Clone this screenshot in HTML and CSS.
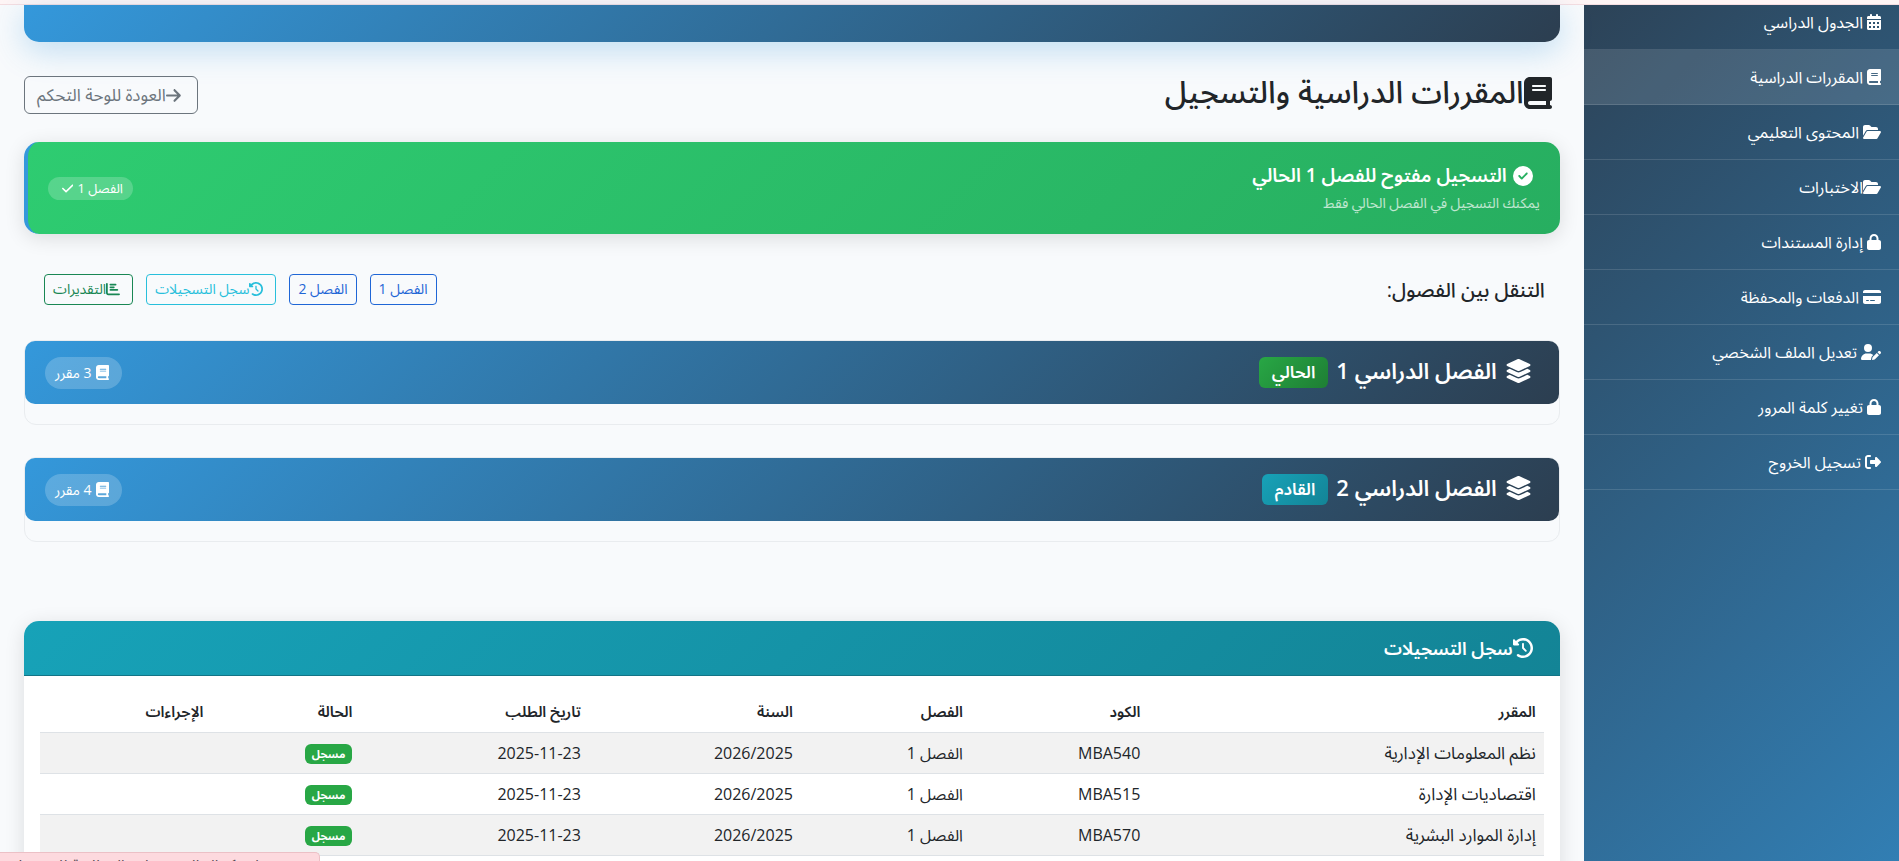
FILE: index.html
```html
<!DOCTYPE html>
<html lang="ar" dir="rtl">
<head>
<meta charset="utf-8">
<title>المقررات الدراسية والتسجيل</title>
<link rel="stylesheet" href="styles.css">
</head>
<body>
<svg class="sprite" aria-hidden="true">
  <symbol id="book" viewBox="0 0 448 512"><path d="M96 0C43 0 0 43 0 96V416c0 53 43 96 96 96H384h32c17.7 0 32-14.3 32-32s-14.3-32-32-32V384c17.7 0 32-14.3 32-32V32c0-17.7-14.3-32-32-32H384 96zm0 384H352v64H96c-17.7 0-32-14.3-32-32s14.3-32 32-32zm32-240c0-8.8 7.2-16 16-16H336c8.8 0 16 7.2 16 16s-7.2 16-16 16H144c-8.8 0-16-7.2-16-16zm16 48H336c8.8 0 16 7.2 16 16s-7.2 16-16 16H144c-8.8 0-16-7.2-16-16s7.2-16 16-16z"/></symbol>
  <symbol id="calendar" viewBox="0 0 448 512"><path d="M128 0c17.7 0 32 14.3 32 32V64H288V32c0-17.7 14.3-32 32-32s32 14.3 32 32V64h48c26.5 0 48 21.5 48 48v48H0V112C0 85.5 21.5 64 48 64H96V32c0-17.7 14.3-32 32-32zM0 192H448V464c0 26.5-21.5 48-48 48H48c-26.5 0-48-21.5-48-48V192zM64 256v64h64v-64zM192 256v64h64v-64zM320 256v64h64v-64zM64 384v64h64v-64zM192 384v64h64v-64zM320 384v64h64v-64z" fill-rule="evenodd"/></symbol>
  <symbol id="folder" viewBox="0 0 576 512"><path d="M88.7 223.8L0 375.8V96C0 60.7 28.7 32 64 32H181.5c17 0 33.3 6.7 45.3 18.7l26.5 26.5c12 12 28.3 18.7 45.3 18.7H416c35.3 0 64 28.7 64 64v32H144c-22.8 0-43.8 12.1-55.3 31.8zm27.6 16.1C122.1 230 132.6 224 144 224H544c11.5 0 22 6.1 27.7 16.1s5.7 22.2-.1 32.1l-112 192C453.9 474 443.4 480 432 480H32c-11.5 0-22-6.1-27.7-16.1s-5.7-22.2 .1-32.1l112-192z"/></symbol>
  <symbol id="lock" viewBox="0 0 448 512"><path d="M144 144v48H304V144c0-44.2-35.8-80-80-80s-80 35.8-80 80zM80 192V144C80 64.5 144.5 0 224 0s144 64.5 144 144v48h16c35.3 0 64 28.7 64 64V448c0 35.3-28.7 64-64 64H64c-35.3 0-64-28.7-64-64V256c0-35.3 28.7-64 64-64H80z"/></symbol>
  <symbol id="card" viewBox="0 0 576 512"><path d="M64 32C28.7 32 0 60.7 0 96v32H576V96c0-35.3-28.7-64-64-64H64zM576 224H0V416c0 35.3 28.7 64 64 64H512c35.3 0 64-28.7 64-64V224zM112 352h64c8.8 0 16 7.2 16 16s-7.2 16-16 16H112c-8.8 0-16-7.2-16-16s7.2-16 16-16zm112 16c0-8.8 7.2-16 16-16H368c8.8 0 16 7.2 16 16s-7.2 16-16 16H240c-8.8 0-16-7.2-16-16z"/></symbol>
  <symbol id="user" viewBox="0 0 640 512"><path d="M224 256A128 128 0 1 0 224 0a128 128 0 1 0 0 256zm-45.7 48C79.8 304 0 383.8 0 482.3C0 498.7 13.3 512 29.7 512H322.8c-3.1-8.8-3.7-18.4-1.4-27.8l15-60.1c2.8-11.3 8.6-21.5 16.8-29.7l40.3-40.3c-32.1-31-75.7-50.1-123.9-50.1H178.3zm435.5-68.3c-15.6-15.6-40.9-15.6-56.6 0l-29.4 29.4 71 71 29.4-29.4c15.6-15.6 15.6-40.9 0-56.6l-14.4-14.4zM375.9 417c-4.1 4.1-7 9.2-8.4 14.9l-15 60.1c-1.4 5.5 .2 11.2 4.2 15.2s9.7 5.6 15.2 4.2l60.1-15c5.6-1.4 10.8-4.3 14.9-8.4L576.1 358.7l-71-71L375.9 417z"/></symbol>
  <symbol id="exit" viewBox="0 0 512 512"><path d="M377.9 105.9L500.7 228.7c7.2 7.2 11.3 17.1 11.3 27.3s-4.1 20.1-11.3 27.3L377.9 406.1c-6.4 6.4-15 9.9-24 9.9c-18.7 0-33.9-15.2-33.9-33.9l0-62.1-128 0c-17.7 0-32-14.3-32-32l0-64c0-17.7 14.3-32 32-32l128 0 0-62.1c0-18.7 15.2-33.9 33.9-33.9c9 0 17.6 3.6 24 9.9zM160 96L96 96c-17.7 0-32 14.3-32 32l0 256c0 17.7 14.3 32 32 32l64 0c17.7 0 32 14.3 32 32s-14.3 32-32 32l-64 0c-53 0-96-43-96-96L0 128C0 75 43 32 96 32l64 0c17.7 0 32 14.3 32 32s-14.3 32-32 32z"/></symbol>
  <symbol id="arrow" viewBox="0 0 448 512"><path d="M438.6 278.6c12.5-12.5 12.5-32.8 0-45.3l-160-160c-12.5-12.5-32.8-12.5-45.3 0s-12.5 32.8 0 45.3L338.8 224 32 224c-17.7 0-32 14.3-32 32s14.3 32 32 32l306.7 0L233.4 393.4c-12.5 12.5-12.5 32.8 0 45.3s32.8 12.5 45.3 0l160-160z"/></symbol>
  <symbol id="circle-check" viewBox="0 0 512 512"><path d="M256 512A256 256 0 1 0 256 0a256 256 0 1 0 0 512zM369 209L241 337c-9.4 9.4-24.6 9.4-33.9 0l-64-64c-9.4-9.4-9.4-24.6 0-33.9s24.6-9.4 33.9 0l47 47L335 175c9.4-9.4 24.6-9.4 33.9 0s9.4 24.6 0 33.9z"/></symbol>
  <symbol id="check" viewBox="0 0 448 512"><path d="M438.6 105.4c12.5 12.5 12.5 32.8 0 45.3l-256 256c-12.5 12.5-32.8 12.5-45.3 0l-128-128c-12.5-12.5-12.5-32.8 0-45.3s32.8-12.5 45.3 0L160 338.7 393.4 105.4c12.5-12.5 32.8-12.5 45.3 0z"/></symbol>
  <symbol id="history" viewBox="0 0 512 512"><path d="M75 75L41 41C25.9 25.9 0 36.6 0 57.9V168c0 13.3 10.7 24 24 24H134.1c21.4 0 32.1-25.9 17-41l-30.8-30.8C155 85.5 203 64 256 64c106 0 192 86 192 192s-86 192-192 192c-40.8 0-78.6-12.7-109.7-34.4c-14.5-10.1-34.4-6.6-44.6 7.9s-6.6 34.4 7.9 44.6C151.2 495 201.7 512 256 512c141.4 0 256-114.6 256-256S397.4 0 256 0C185.3 0 121.3 28.7 75 75zm181 53c-13.3 0-24 10.7-24 24V256c0 6.4 2.5 12.5 7 17l72 72c9.4 9.4 24.6 9.4 33.9 0s9.4-24.6 0-33.9l-65-65V152c0-13.3-10.7-24-24-24z"/></symbol>
  <symbol id="chart" viewBox="0 0 512 512"><path d="M32 32c17.7 0 32 14.3 32 32V400c0 8.8 7.2 16 16 16H480c17.7 0 32 14.3 32 32s-14.3 32-32 32H80c-44.2 0-80-35.8-80-80V64C0 46.3 14.3 32 32 32zm96 64c0-17.7 14.3-32 32-32l192 0c17.7 0 32 14.3 32 32s-14.3 32-32 32H160c-17.7 0-32-14.3-32-32zm32 64H288c17.7 0 32 14.3 32 32s-14.3 32-32 32H160c-17.7 0-32-14.3-32-32s14.3-32 32-32zm0 96H416c17.7 0 32 14.3 32 32s-14.3 32-32 32H160c-17.7 0-32-14.3-32-32s14.3-32 32-32z"/></symbol>
  <symbol id="layers" viewBox="0 0 576 512"><path d="M264.5 5.2c14.9-6.9 32.1-6.9 47 0l218.6 101c8.5 3.9 13.9 12.4 13.9 21.8s-5.4 17.9-13.9 21.8l-218.6 101c-14.9 6.9-32.1 6.9-47 0L45.9 149.8C37.4 145.8 32 137.3 32 128s5.4-17.9 13.9-21.8L264.5 5.2zM476.9 209.6l53.2 24.6c8.5 3.9 13.9 12.4 13.9 21.8s-5.4 17.9-13.9 21.8l-218.6 101c-14.9 6.9-32.1 6.9-47 0L45.9 277.8C37.4 273.8 32 265.3 32 256s5.4-17.9 13.9-21.8l53.2-24.6 152 70.2c23.4 10.8 50.4 10.8 73.8 0l152-70.2zm-152 198.2l152-70.2 53.2 24.6c8.5 3.9 13.9 12.4 13.9 21.8s-5.4 17.9-13.9 21.8l-218.6 101c-14.9 6.9-32.1 6.9-47 0L45.9 405.8C37.4 401.8 32 393.3 32 384s5.4-17.9 13.9-21.8l53.2-24.6 152 70.2c23.4 10.8 50.4 10.8 73.8 0z"/></symbol>
</svg>
<div class="top-strip"></div>
<div class="layout">
  <nav class="sidebar">
    <a class="side-link" href="#"><svg class="icon w14"><use href="#calendar"/></svg>الجدول الدراسي</a>
    <a class="side-link active" href="#"><svg class="icon w14"><use href="#book"/></svg>المقررات الدراسية</a>
    <a class="side-link" href="#"><svg class="icon w18"><use href="#folder"/></svg>المحتوى التعليمي</a>
    <a class="side-link tight" href="#"><svg class="icon w18"><use href="#folder"/></svg>الاختبارات</a>
    <a class="side-link" href="#"><svg class="icon w14"><use href="#lock"/></svg>إدارة المستندات</a>
    <a class="side-link" href="#"><svg class="icon w18"><use href="#card"/></svg>الدفعات والمحفظة</a>
    <a class="side-link" href="#"><svg class="icon w20"><use href="#user"/></svg>تعديل الملف الشخصي</a>
    <a class="side-link" href="#"><svg class="icon w14"><use href="#lock"/></svg>تغيير كلمة المرور</a>
    <a class="side-link" href="#"><svg class="icon w16"><use href="#exit"/></svg>تسجيل الخروج</a>
  </nav>
  <main class="main">
    <header class="hero"></header>
    <div class="page-head">
      <h1 class="page-title"><svg class="icon w14"><use href="#book"/></svg><span>المقررات الدراسية والتسجيل</span></h1>
      <a class="btn btn-back" href="#"><svg class="icon w14"><use href="#arrow"/></svg>العودة للوحة التحكم</a>
    </div>
    <section class="notice">
      <div>
        <h2 class="notice-title"><svg class="icon w16"><use href="#circle-check"/></svg><span>التسجيل مفتوح للفصل 1 الحالي</span></h2>
        <p class="notice-text">يمكنك التسجيل في الفصل الحالي فقط</p>
      </div>
      <span class="notice-badge">الفصل 1<svg class="icon w14"><use href="#check"/></svg></span>
    </section>
    <section class="jump">
      <h2 class="jump-title">التنقل بين الفصول:</h2>
      <div class="jump-links">
        <a class="btn btn-sm blue" href="#term1">الفصل 1</a>
        <a class="btn btn-sm blue" href="#term2">الفصل 2</a>
        <a class="btn btn-sm cyan" href="#log"><svg class="icon w16"><use href="#history"/></svg>سجل التسجيلات</a>
        <a class="btn btn-sm green" href="#"><svg class="icon w16"><use href="#chart"/></svg>التقديرات</a>
      </div>
    </section>
    <section class="term" id="term1">
      <div class="term-head">
        <h2 class="term-title"><svg class="icon w18"><use href="#layers"/></svg><span>الفصل الدراسي 1</span><span class="term-tag current">الحالي</span></h2>
        <span class="term-count"><svg class="icon w14"><use href="#book"/></svg>3 مقرر</span>
      </div>
    </section>
    <section class="term" id="term2">
      <div class="term-head">
        <h2 class="term-title"><svg class="icon w18"><use href="#layers"/></svg><span>الفصل الدراسي 2</span><span class="term-tag next">القادم</span></h2>
        <span class="term-count"><svg class="icon w14"><use href="#book"/></svg>4 مقرر</span>
      </div>
    </section>
    <section class="log" id="log">
      <h2 class="log-title"><svg class="icon w16"><use href="#history"/></svg><span>سجل التسجيلات</span></h2>
      <div class="log-body">
        <table class="log-table">
          <thead><tr><th class="c-course">المقرر</th><th class="c-code">الكود</th><th class="c-term">الفصل</th><th class="c-year">السنة</th><th class="c-date">تاريخ الطلب</th><th class="c-state">الحالة</th><th>الإجراءات</th></tr></thead>
          <tbody>
            <tr><td class="course">نظم المعلومات الإدارية</td><td>MBA540</td><td>الفصل 1</td><td><bdi dir="ltr">2026/2025</bdi></td><td><bdi dir="ltr">2025-11-23</bdi></td><td><span class="state">مسجل</span></td><td></td></tr>
            <tr><td class="course">اقتصاديات الإدارة</td><td>MBA515</td><td>الفصل 1</td><td><bdi dir="ltr">2026/2025</bdi></td><td><bdi dir="ltr">2025-11-23</bdi></td><td><span class="state">مسجل</span></td><td></td></tr>
            <tr><td class="course">إدارة الموارد البشرية</td><td>MBA570</td><td>الفصل 1</td><td><bdi dir="ltr">2026/2025</bdi></td><td><bdi dir="ltr">2025-11-23</bdi></td><td><span class="state">مسجل</span></td><td></td></tr>
          </tbody>
        </table>
      </div>
    </section>
  </main>
</div>
<div class="toast">يرجى استكمال المستندات المطلوبة للتسجيل</div>
</body>
</html>
```
FILE: styles.css
```css
* { box-sizing: border-box; }
body {
  margin: 0;
  height: 100vh;
  overflow: hidden;
  display: flex;
  flex-direction: column;
  background: #f8fafc;
  color: #212529;
  font: 16px/24px "Segoe UI", "Open Sans", "Noto Sans Arabic", "DejaVu Sans", sans-serif;
}
h1, h2, p { margin: 0; font-weight: 500; }
a { color: inherit; text-decoration: none; }
.sprite { position: absolute; width: 0; height: 0; }
.icon { height: 1em; fill: currentColor; flex: none; }
.w14 { width: 0.875em; }
.w16 { width: 1em; }
.w18 { width: 1.125em; }
.w20 { width: 1.25em; }
.top-strip { flex: none; height: 5px; background: #fff5f5; border-bottom: 1px solid #f5dde0; }
.layout { flex: 1; min-height: 0; display: flex; }

.sidebar {
  flex: none;
  width: 16.6%;
  background: linear-gradient(135deg, #2c3e50, #3498db) 0 -90px / 100% 1450px;
  color: #fff;
}
.side-link {
  display: flex;
  align-items: center;
  gap: 4px;
  height: 55px;
  padding: 0 18px 1px;
  border-bottom: 1px solid rgba(255, 255, 255, 0.13);
}
.side-link:first-child { height: 45px; padding-bottom: 10px; }
.side-link.active { background: rgba(255, 255, 255, 0.12); }
.side-link.tight { gap: 0; }

.main { flex: 1; min-width: 0; padding: 0 24px; }
.hero {
  height: 37px;
  border-radius: 0 0 15px 15px;
  background: linear-gradient(135deg, #3498db, #2c3e50);
  box-shadow: 0 8px 32px rgba(52, 152, 219, 0.3);
}
.page-head { display: flex; align-items: flex-end; justify-content: space-between; padding: 30px 0 28px; }
.page-title { display: flex; align-items: center; padding-right: 8px; font-size: 32px; line-height: 42px; }
.page-title span { padding-bottom: 4px; font-size: 31px; line-height: 38px; }
.btn {
  display: flex;
  align-items: center;
  padding: 6px 12px;
  border: 1px solid;
  border-radius: 6px;
}
.btn .icon { margin-right: 4px; }
.btn-back { height: 38px; color: #6c757d; font-size: 17px; }
.btn-sm { height: 31px; padding: 4px 8px 6px; border-radius: 4px; font-size: 14px; }
.blue { color: #1f66d6; }
.cyan { color: #28bfdb; }
.green { color: #198754; }

.notice {
  display: flex;
  align-items: center;
  justify-content: space-between;
  height: 92px;
  padding: 0 20px;
  border-left: 4px solid #3498db;
  border-radius: 15px;
  background: linear-gradient(135deg, #2ecc71, #27ae60);
  box-shadow: 0 4px 20px rgba(0, 0, 0, 0.12);
  color: #fff;
}
.notice-title { display: flex; align-items: center; gap: 6px; padding-right: 7px; font-size: 20px; line-height: 30px; font-weight: 700; }
.notice-title span { padding-bottom: 2px; font-size: 19px; line-height: 28px; font-weight: 600; }
.notice-text { font-size: 14px; line-height: 24px; font-weight: 400; opacity: 0.7; }
.notice-badge {
  display: flex;
  align-items: center;
  gap: 4px;
  height: 23px;
  padding: 0 10px 0 14px;
  border-radius: 12px;
  background: rgba(255, 255, 255, 0.2);
  font-size: 13px;
}

.jump { display: flex; align-items: center; justify-content: space-between; padding: 40px 15px 35px 20px; }
.jump-title { font-size: 20px; line-height: 30px; }
.jump-links { display: flex; gap: 13px; }

.term { margin-bottom: 32px; padding-bottom: 20px; border: 1px solid #e9ecef; border-radius: 12px; }
.term-head {
  display: flex;
  align-items: center;
  justify-content: space-between;
  height: 63px;
  padding: 0 20px;
  border-radius: 10px;
  background: linear-gradient(135deg, #3498db, #2c3e50);
  color: #fff;
}
.term-title { display: flex; align-items: center; gap: 8px; padding: 0 7px 3px 0; font-size: 24px; line-height: 32px; font-weight: 600; }
.term-title span { padding-bottom: 2px; font-size: 22px; line-height: 30px; }
.term-title .term-tag { height: 31px; margin-top: 2px; padding: 0 13px; border-radius: 6px; font-size: 17px; line-height: 29px; }
.current { background: linear-gradient(135deg, #28a745, #1e7e34); }
.next { background: linear-gradient(135deg, #17a2b8, #138496); }
.term-count { display: flex; align-items: center; gap: 4px; height: 32px; padding: 0 13px 0 10px; border-radius: 16px; background: rgba(255, 255, 255, 0.2); font-size: 14px; }
.term-count .icon { font-size: 15px; }

.log { margin-top: 79px; border-radius: 15px 15px 0 0; background: #fff; box-shadow: 0 4px 20px rgba(0, 0, 0, 0.12); }
.log-title {
  display: flex;
  align-items: center;
  height: 55px;
  padding: 0 27px;
  border-bottom: 1px solid #137486;
  border-radius: 15px 15px 0 0;
  background: linear-gradient(135deg, #17a2b8, #138496);
  color: #fff;
  font-size: 20px;
  font-weight: 600;
}
.log-title span { font-size: 18px; }
.log-body { padding: 15px 16px 40px; }
.log-table { width: 100%; table-layout: fixed; border-collapse: collapse; }
.log-table th, .log-table td { height: 41px; padding: 0 8px; border-bottom: 1px solid #dee2e6; text-align: right; font-weight: 400; }
.log-table th { font-size: 15px; font-weight: 600; }
.log-table .course { font-size: 17px; }
.log-table tbody tr:nth-child(odd) { background: #f2f2f2; }
.c-course { width: 26.3%; }
.c-code { width: 11.8%; }
.c-term { width: 11.3%; }
.c-year { width: 14.1%; }
.c-date { width: 15.2%; }
.c-state { width: 9.9%; }
.state { display: inline-block; height: 20px; padding: 0 7px; border-radius: 6px; background: #28a745; color: #fff; font-size: 11px; line-height: 20px; font-weight: 700; vertical-align: middle; }

.toast {
  position: fixed;
  left: 0;
  bottom: -16px;
  width: 320px;
  padding: 0 24px;
  border: 1px solid #ecc0c6;
  border-width: 1px 1px 0 0;
  border-radius: 0 5px 0 0;
  background: #fdd9de;
  color: #5c4a55;
  line-height: 24px;
  white-space: nowrap;
}
```
